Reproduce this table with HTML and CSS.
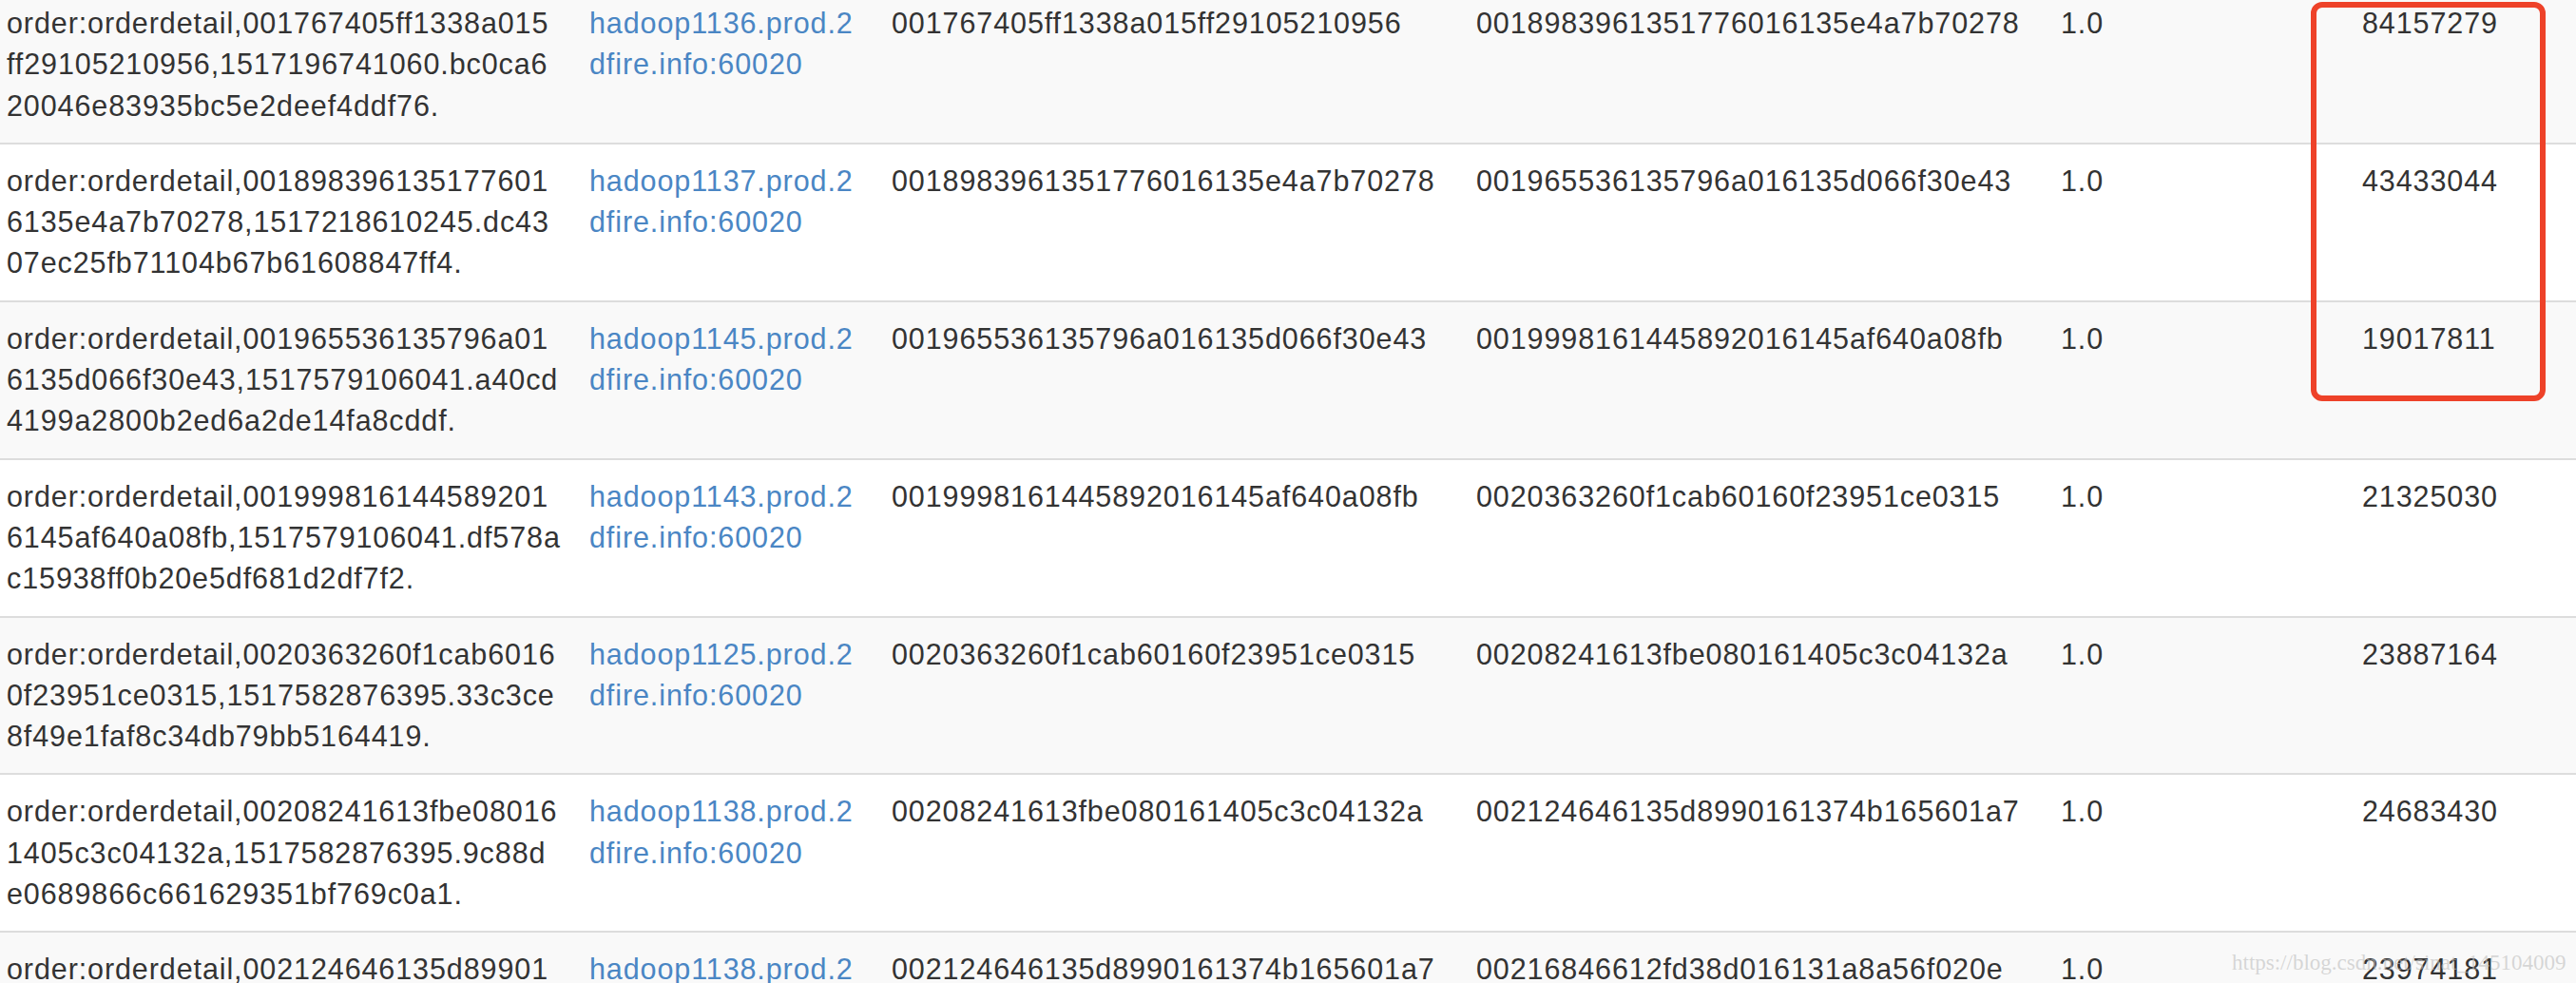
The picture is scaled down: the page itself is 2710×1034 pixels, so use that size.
FILE: index.html
```html
<!DOCTYPE html>
<html lang="en">
<head>
    <meta charset="UTF-8">
    <title>Regions</title>
    <link rel="stylesheet" href="styles.css">
</head>
<body>
    <div class="page">
        <table class="region-table">
            <colgroup>
                <col class="col-name">
                <col class="col-server">
                <col class="col-start">
                <col class="col-end">
                <col class="col-locality">
                <col class="col-requests">
            </colgroup>
            <tbody>
                <tr>
                    <td>order:orderdetail,001767405ff1338a015<br>ff29105210956,1517196741060.bc0ca6<br>20046e83935bc5e2deef4ddf76.</td>
                    <td><a href="#">hadoop1136.prod.2<br>dfire.info:60020</a></td>
                    <td>001767405ff1338a015ff29105210956</td>
                    <td>0018983961351776016135e4a7b70278</td>
                    <td>1.0</td>
                    <td>84157279</td>
                </tr>
                <tr>
                    <td>order:orderdetail,001898396135177601<br>6135e4a7b70278,1517218610245.dc43<br>07ec25fb71104b67b61608847ff4.</td>
                    <td><a href="#">hadoop1137.prod.2<br>dfire.info:60020</a></td>
                    <td>0018983961351776016135e4a7b70278</td>
                    <td>001965536135796a016135d066f30e43</td>
                    <td>1.0</td>
                    <td>43433044</td>
                </tr>
                <tr>
                    <td>order:orderdetail,001965536135796a01<br>6135d066f30e43,1517579106041.a40cd<br>4199a2800b2ed6a2de14fa8cddf.</td>
                    <td><a href="#">hadoop1145.prod.2<br>dfire.info:60020</a></td>
                    <td>001965536135796a016135d066f30e43</td>
                    <td>0019998161445892016145af640a08fb</td>
                    <td>1.0</td>
                    <td>19017811</td>
                </tr>
                <tr>
                    <td>order:orderdetail,001999816144589201<br>6145af640a08fb,1517579106041.df578a<br>c15938ff0b20e5df681d2df7f2.</td>
                    <td><a href="#">hadoop1143.prod.2<br>dfire.info:60020</a></td>
                    <td>0019998161445892016145af640a08fb</td>
                    <td>0020363260f1cab60160f23951ce0315</td>
                    <td>1.0</td>
                    <td>21325030</td>
                </tr>
                <tr>
                    <td>order:orderdetail,0020363260f1cab6016<br>0f23951ce0315,1517582876395.33c3ce<br>8f49e1faf8c34db79bb5164419.</td>
                    <td><a href="#">hadoop1125.prod.2<br>dfire.info:60020</a></td>
                    <td>0020363260f1cab60160f23951ce0315</td>
                    <td>00208241613fbe080161405c3c04132a</td>
                    <td>1.0</td>
                    <td>23887164</td>
                </tr>
                <tr>
                    <td>order:orderdetail,00208241613fbe08016<br>1405c3c04132a,1517582876395.9c88d<br>e0689866c661629351bf769c0a1.</td>
                    <td><a href="#">hadoop1138.prod.2<br>dfire.info:60020</a></td>
                    <td>00208241613fbe080161405c3c04132a</td>
                    <td>002124646135d8990161374b165601a7</td>
                    <td>1.0</td>
                    <td>24683430</td>
                </tr>
                <tr>
                    <td>order:orderdetail,002124646135d89901<br>61374b165601a7,</td>
                    <td><a href="#">hadoop1138.prod.2<br>dfire.info:60020</a></td>
                    <td>002124646135d8990161374b165601a7</td>
                    <td>00216846612fd38d016131a8a56f020e</td>
                    <td>1.0</td>
                    <td>23974181</td>
                </tr>
            </tbody>
        </table>

        <!-- annotation drawn over the request counts -->
        <div class="highlight-box"></div>
        <div class="watermark">https://blog.csdn.net/sinat_145104009</div>
    </div>
</body>
</html>
```

FILE: styles.css
```css
/* Region table */
body {
    margin: 0;
    background-color: #fff;
    font-family: "Liberation Sans", Arial, Helvetica, sans-serif;
    color: #333;
    overflow: hidden;
}
.page {
    position: relative;
    height: 1034px;
    overflow: hidden;
}
.region-table {
    width: 100%;
    margin-top: -16px;
    border-collapse: collapse;
    table-layout: fixed;
    font-size: 30.5px;
    letter-spacing: 0.9px;
    line-height: 43.3px;
}
.col-name { width: 613px; }
.col-server { width: 318px; }
.col-start { width: 615px; }
.col-end { width: 615px; }
.col-locality { width: 317px; }
.region-table td {
    padding: 17px 7px;
    border-top: 2px solid #ddd;
    vertical-align: top;
    white-space: nowrap;
}
.region-table tr:nth-child(odd) {
    background-color: #f9f9f9;
}
.region-table a {
    color: #4a86c4;
    text-decoration: none;
}
.highlight-box {
    position: absolute;
    left: 2431px;
    top: 2px;
    width: 247px;
    height: 420px;
    box-sizing: border-box;
    border: 6px solid #ee4229;
    border-radius: 12px;
}
.watermark {
    position: absolute;
    left: 2348px;
    top: 1001px;
    font-family: "Liberation Serif", "Times New Roman", serif;
    font-size: 23px;
    line-height: 1;
    color: rgba(190, 190, 190, 0.6);
    white-space: nowrap;
}
```
